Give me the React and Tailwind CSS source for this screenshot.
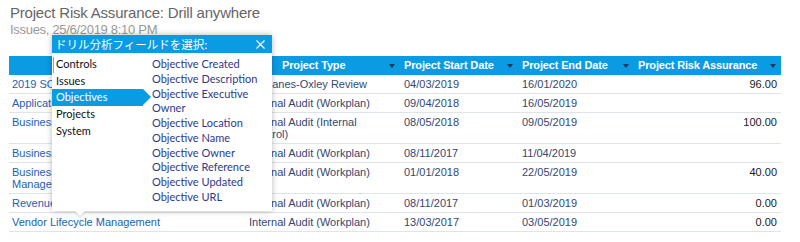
const columns = [
  { label: "Project Name", width: "w-[236px]", pad: "pl-[90px]" },
  { label: "Project Type", width: "w-[155px]", pad: "pl-[37px]" },
  { label: "Project Start Date", width: "w-[118px]", pad: "pl-[4px]" },
  { label: "Project End Date", width: "w-[116px]", pad: "pl-[4px]" },
  { label: "Project Risk Assurance", width: "w-[147px]", pad: "pl-[4px]" },
];

const rows = [
  {
    name: "2019 SOX Compliance Review",
    type: "Sarbanes-Oxley Review",
    start: "04/03/2019",
    end: "16/01/2020",
    risk: "96.00",
  },
  {
    name: "Application Security Review",
    type: "Internal Audit (Workplan)",
    start: "09/04/2018",
    end: "16/05/2019",
    risk: "",
  },
  {
    name: "Business Process Controls Review",
    type: "Internal Audit (Internal Control)",
    start: "08/05/2018",
    end: "09/05/2019",
    risk: "100.00",
  },
  {
    name: "Business Continuity Planning",
    type: "Internal Audit (Workplan)",
    start: "08/11/2017",
    end: "11/04/2019",
    risk: "",
  },
  {
    name: "Business Continuity and Disaster Recovery Management",
    type: "Internal Audit (Workplan)",
    start: "01/01/2018",
    end: "22/05/2019",
    risk: "40.00",
  },
  {
    name: "Revenue Assurance Review",
    type: "Internal Audit (Workplan)",
    start: "08/11/2017",
    end: "01/03/2019",
    risk: "0.00",
  },
  {
    name: "Vendor Lifecycle Management",
    type: "Internal Audit (Workplan)",
    start: "13/03/2017",
    end: "03/05/2019",
    risk: "0.00",
  },
];

const categories = ["Controls", "Issues", "Objectives", "Projects", "System"];

// the popup list wraps the long one onto a second line
const fields = [
  "Objective Created",
  "Objective Description",
  "Objective Executive\nOwner",
  "Objective Location",
  "Objective Name",
  "Objective Owner",
  "Objective Reference",
  "Objective Updated",
  "Objective URL",
];

const SortArrow = () => (
  <span className="h-0 w-0 shrink-0 border-x-[3.5px] border-t-[4px] border-x-transparent border-t-[#1d3a5c]" />
);

const DrillPopup = () => {
  return (
    <div className="absolute left-[52px] top-[35px] w-[220px] bg-white shadow-[0_0_6px_rgba(0,0,0,0.28)]">
      <div className="flex h-[18px] items-center justify-between bg-[#0b9be2] pl-[3px] pr-[7px]">
        <span className="font-['Noto_Sans_CJK_JP',sans-serif] text-[11.5px] leading-[18px] text-white">
          ドリル分析フィールドを選択:
        </span>
        <svg viewBox="0 0 9 9" className="h-[9px] w-[9px]" aria-hidden="true">
          <path d="M0.5 0.5 8.5 8.5 M8.5 0.5 0.5 8.5" stroke="white" strokeWidth="1.1" fill="none" />
        </svg>
      </div>

      <div className="relative flex h-[158px] font-['Lato',sans-serif] text-[11px]">
        <span className="absolute left-[1px] top-[4px] h-[16px] w-px bg-[#5fb6ea]" />
        <ul className="w-[91px] shrink-0 pt-[3px]">
          {categories.map((item) => (
            <li
              key={item}
              className={`relative h-[16.7px] pl-[4px] leading-[16.7px] ${
                item === "Objectives" ? "bg-[#0b9be2] text-white" : "text-[#111]"
              }`}
            >
              {item}
              {item === "Objectives" && (
                <span className="absolute left-full top-0 h-0 w-0 border-y-[8.35px] border-l-[8px] border-y-transparent border-l-[#0b9be2]" />
              )}
            </li>
          ))}
        </ul>
        <ul className="pl-[9px] pt-[4px] text-[#2c3a8c]">
          {fields.map((field) => (
            <li key={field} className="whitespace-pre leading-[14.75px]">
              {field}
            </li>
          ))}
        </ul>
      </div>

      <span className="absolute left-[23px] top-full h-0 w-0 border-x-[5.5px] border-t-[5px] border-x-transparent border-t-white drop-shadow-[0_2px_1px_rgba(0,0,0,0.12)]" />
    </div>
  );
};

export default function App() {
  return (
    <div className="relative h-[242px] w-[800px] overflow-hidden bg-white font-['Liberation_Sans',Arial,sans-serif]">
      <div className="px-[10px] pt-[4px]">
        <div className="text-[15px] leading-[18px] tracking-[-0.2px] text-[#666]">
          Project Risk Assurance: Drill anywhere
        </div>
        <div className="text-[13px] leading-[15px] tracking-[-0.3px] text-[#9a9a9a]">
          Issues, 25/6/2019 8:10 PM
        </div>
      </div>

      <div className="ml-[9px] mt-[19px] w-[772px] text-[11px]">
        <div className="flex h-[19px] bg-[#0b9be2] font-bold text-white">
          {columns.map((col, i) => (
            <div key={col.label} className={`flex items-center pr-[5px] ${col.width} ${col.pad}`}>
              <span className="flex-1 leading-[19px] tracking-[-0.15px]">{col.label}</span>
              {i > 0 && <SortArrow />}
            </div>
          ))}
        </div>

        {rows.map((row) => (
          <div key={row.name} className="flex border-b border-[#dde4eb] leading-[12px]">
            <div className="w-[236px] py-[3px] pl-[3px] pr-[6px] text-[#1c5fae]">{row.name}</div>
            <div className="w-[155px] py-[3px] pl-[4px] pr-[10px] text-[#34476f]">{row.type}</div>
            <div className="w-[118px] py-[3px] pl-[4px] text-[#34476f]">{row.start}</div>
            <div className="w-[116px] py-[3px] pl-[4px] text-[#34476f]">{row.end}</div>
            <div className="w-[147px] py-[3px] pr-[4px] text-right text-[#1a1a1a]">{row.risk}</div>
          </div>
        ))}
      </div>

      <DrillPopup />
    </div>
  );
}
